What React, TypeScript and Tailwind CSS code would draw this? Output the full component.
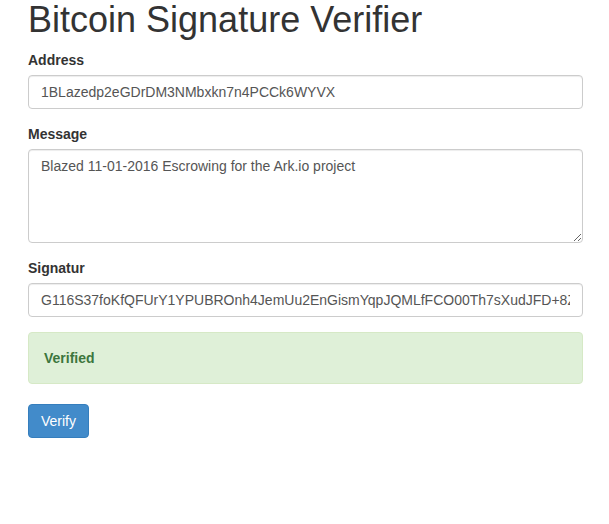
export default function App() {
  const font = { fontFamily: '"Liberation Sans", Arial, sans-serif' };

  return (
    <div
      className="min-h-screen bg-white pl-[28px] pr-[26px] text-[14px] leading-[20px] text-[#333]"
      style={font}
    >
      <h1 className="mb-[10px] text-[36px] font-normal leading-[1.1] text-[#333]">
        Bitcoin Signature Verifier
      </h1>

      <form onSubmit={(e) => e.preventDefault()}>
        {/* Address */}
        <div className="mb-[15px]">
          <label className="mb-[5px] block font-bold">Address</label>
          <input
            type="text"
            readOnly
            value="1BLazedp2eGDrDM3NMbxkn7n4PCCk6WYVX"
            className="block h-[34px] w-full rounded-[4px] border border-[#ccc] bg-white px-[12px] py-[6px] text-[14px] leading-[20px] text-[#555] shadow-[inset_0_1px_1px_rgba(0,0,0,0.075)] outline-none"
            style={font}
          />
        </div>

        {/* Message */}
        <div className="mb-[15px]">
          <label className="mb-[5px] block font-bold">Message</label>
          <textarea
            rows={4}
            readOnly
            value="Blazed 11-01-2016 Escrowing for the Ark.io project"
            className="block h-[94px] w-full resize-y rounded-[4px] border border-[#ccc] bg-white px-[12px] py-[6px] text-[14px] leading-[20px] text-[#555] shadow-[inset_0_1px_1px_rgba(0,0,0,0.075)] outline-none"
            style={font}
          />
        </div>

        {/* Signature */}
        <div className="mb-[15px]">
          <label className="mb-[5px] block font-bold">Signatur</label>
          <input
            type="text"
            readOnly
            value="G116S37foKfQFUrY1YPUBROnh4JemUu2EnGismYqpJQMLfFCO00Th7sXudJFD+8ZqP4rQ1Vn6xPjR2mXpF0s="
            className="block h-[34px] w-full rounded-[4px] border border-[#ccc] bg-white px-[12px] py-[6px] text-[14px] leading-[20px] text-[#555] shadow-[inset_0_1px_1px_rgba(0,0,0,0.075)] outline-none"
            style={font}
          />
        </div>

        {/* Result */}
        <div className="mb-[20px] rounded-[4px] border border-[#d6e9c6] bg-[#dff0d8] p-[15px] font-bold text-[#3c763d]">
          Verified
        </div>

        <button
          type="submit"
          className="rounded-[4px] border border-[#357ebd] bg-[#428bca] px-[12px] py-[6px] text-[14px] leading-[20px] text-white"
          style={font}
        >
          Verify
        </button>
      </form>
    </div>
  );
}
